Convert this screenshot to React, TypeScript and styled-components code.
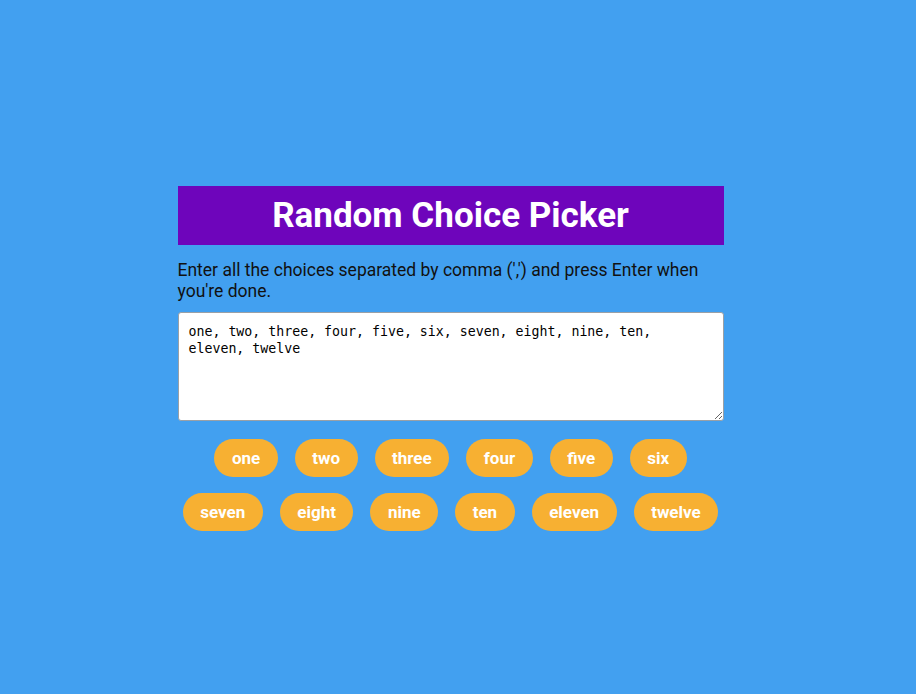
import React, { useState } from "react";
import styled, { createGlobalStyle } from "styled-components";

const Global = createGlobalStyle`
  * { box-sizing: border-box; }
  html, body { margin: 0; padding: 0; }
  body {
    background: #42a0f0;
    font-family: Roboto, "Liberation Sans", sans-serif;
    height: 100vh;
    overflow: hidden;
  }
`;

const Page = styled.div`
  height: 694px;
  display: flex;
  justify-content: center;
  padding: 186px 15px 0 0;
`;

const Container = styled.div`
  width: 546px;
  display: flex;
  flex-direction: column;
`;

const Title = styled.h3`
  margin: 0;
  height: 59px;
  display: flex;
  align-items: center;
  justify-content: center;
  background: #6e05bb;
  color: #ffffff;
  font-size: 35px;
  font-weight: 700;
`;

const Intro = styled.p`
  margin: 15px 0 10px;
  color: #111;
  font-size: 17.5px;
  line-height: 21px;
`;

const Area = styled.textarea`
  width: 100%;
  height: 109px;
  margin: 0;
  padding: 10px 16px 10px 10px;
  border: 1px solid #9aa0a6;
  border-radius: 3px;
  background: #fff;
  color: #000;
  font-family: "DejaVu Sans Mono", monospace;
  font-size: 13.25px;
  line-height: 17px;
  outline: none;
`;

const Tags = styled.div`
  display: flex;
  flex-wrap: wrap;
  justify-content: center;
  column-gap: 17px;
  row-gap: 16px;
  margin-top: 18px;
`;

const Tag = styled.span`
  display: inline-flex;
  align-items: center;
  height: 38px;
  padding: 0 17.5px;
  border-radius: 50px;
  background: #f7b032;
  color: #fff;
  font-size: 17px;
  font-weight: 700;
`;

export default function App() {
  const [text, setText] = useState(
    "one, two, three, four, five, six, seven, eight, nine, ten, eleven, twelve"
  );
  const items = text
    .split(",")
    .map((s) => s.trim())
    .filter(Boolean);
  return (
    <>
      <Global />
      <Page>
        <Container>
          <Title>Random Choice Picker</Title>
          <Intro>
            Enter all the choices separated by comma (',') and press Enter when you're done.
          </Intro>
          <Area value={text} onChange={(e) => setText(e.target.value)} />
          <Tags>
            {items.map((t, i) => (
              <Tag key={i}>{t}</Tag>
            ))}
          </Tags>
        </Container>
      </Page>
    </>
  );
}
